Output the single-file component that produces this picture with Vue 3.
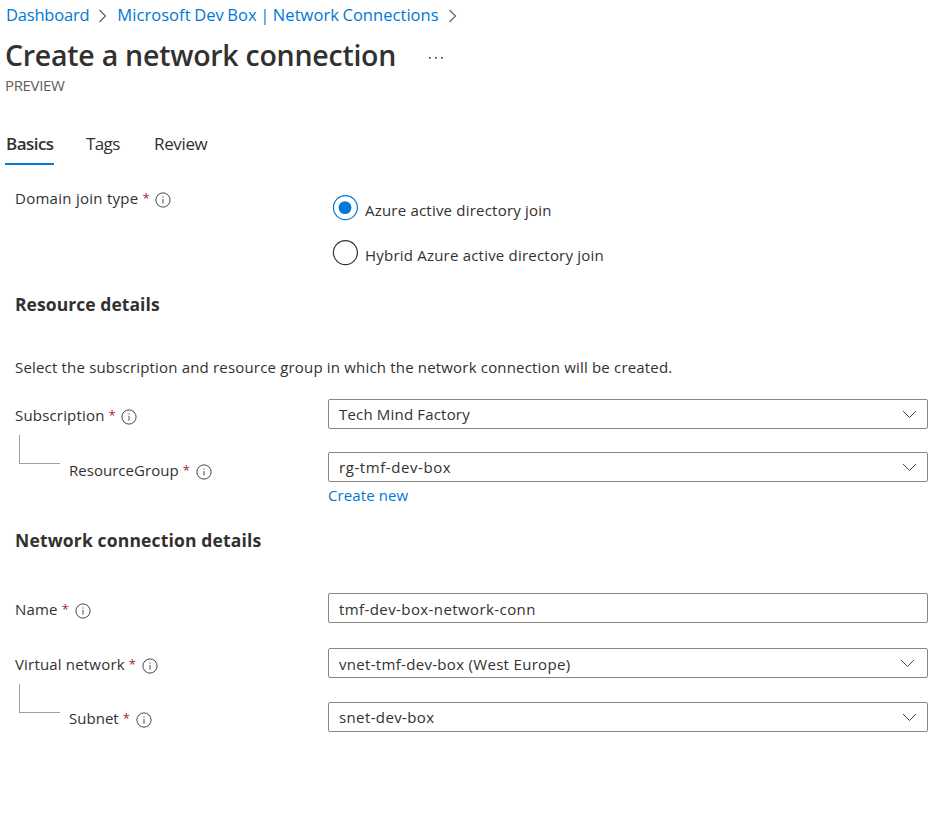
<script setup>
const crumbs = [
  { text: 'Dashboard', cls: 'crumb-dash' },
  { text: 'Microsoft Dev Box | Network Connections', cls: 'crumb-net' },
]
const joinTypes = [
  { text: 'Azure active directory join', checked: true },
  { text: 'Hybrid Azure active directory join', checked: false },
]
const resourceFields = [
  { id: 'subscription', label: 'Subscription', value: 'Tech Mind Factory', select: true },
  { id: 'group', label: 'ResourceGroup', value: 'rg-tmf-dev-box', select: true, nested: true },
]
const networkFields = [
  { id: 'name', label: 'Name', value: 'tmf-dev-box-network-conn' },
  { id: 'vnet', label: 'Virtual network', value: 'vnet-tmf-dev-box (West Europe)', select: true },
  { id: 'subnet', label: 'Subnet', value: 'snet-dev-box', select: true, nested: true },
]
</script>

<template>
  <main class="page">
    <nav class="crumbs">
      <template v-for="c in crumbs" :key="c.text">
        <a :class="c.cls">{{ c.text }}</a>
        <svg class="crumb-arrow" width="9" height="14" viewBox="0 0 9 14"><path d="M1.5 1 L7.5 7 L1.5 13" /></svg>
      </template>
    </nav>
    <header class="title-row">
      <h1>Create a network connection</h1>
      <svg class="more" width="15" height="3" viewBox="0 0 15 3"><rect x="0" y="1" width="1.6" height="1.6" /><rect x="6" y="1" width="1.6" height="1.6" /><rect x="12" y="1" width="1.6" height="1.6" /></svg>
    </header>
    <div class="preview"><span>PREVIEW</span></div>
    <nav class="tabs">
      <a class="tab active"><span>Basics</span></a>
      <a class="tab tags"><span>Tags</span></a>
      <a class="tab review"><span>Review</span></a>
    </nav>

    <section class="join">
      <div class="label">
        <span class="t">Domain join type</span><span class="star">*</span>
        <svg class="info" width="16" height="16" viewBox="0 0 16 16"><circle cx="8" cy="8" r="7.1" /><path d="M8 7v4.6M8 4.4v1.2" /></svg>
      </div>
      <div class="radios">
        <label v-for="j in joinTypes" :key="j.text" class="radio" :class="{ checked: j.checked }">
          <svg width="26" height="26" viewBox="0 0 26 26"><circle class="ring" cx="13.4" cy="12.6" r="12" /><circle v-if="j.checked" class="dot" cx="13" cy="12.6" r="6.4" /></svg>
          <span class="t">{{ j.text }}</span>
        </label>
      </div>
    </section>

    <h2 class="resource-heading"><span>Resource details</span></h2>
    <p class="note"><span>Select the subscription and resource group in which the network connection will be created.</span></p>

    <section class="fields">
      <div v-for="f in resourceFields" :key="f.id" class="row" :class="[f.id, { nested: f.nested }]">
        <div class="label">
          <i v-if="f.nested" class="branch"></i>
          <span class="t">{{ f.label }}</span><span class="star">*</span>
          <svg class="info" width="16" height="16" viewBox="0 0 16 16"><circle cx="8" cy="8" r="7.1" /><path d="M8 7v4.6M8 4.4v1.2" /></svg>
        </div>
        <div class="box">
          <span class="v">{{ f.value }}</span>
          <svg class="chevron" width="15" height="9" viewBox="0 0 15 9"><path d="M1 1 L7.5 7.5 L14 1" /></svg>
        </div>
      </div>
    </section>
    <div class="create"><a>Create new</a></div>

    <h2 class="network-heading"><span>Network connection details</span></h2>
    <section class="fields">
      <div v-for="f in networkFields" :key="f.id" class="row" :class="[f.id, { nested: f.nested }]">
        <div class="label">
          <i v-if="f.nested" class="branch"></i>
          <span class="t">{{ f.label }}</span><span class="star">*</span>
          <svg class="info" width="16" height="16" viewBox="0 0 16 16"><circle cx="8" cy="8" r="7.1" /><path d="M8 7v4.6M8 4.4v1.2" /></svg>
        </div>
        <div class="box">
          <span class="v">{{ f.value }}</span>
          <svg v-if="f.select" class="chevron" width="15" height="9" viewBox="0 0 15 9"><path d="M1 1 L7.5 7.5 L14 1" /></svg>
        </div>
      </div>
    </section>
  </main>
</template>

<style>
body { margin: 0; background: #fff; }
</style>

<style scoped>
.page {
  box-sizing: border-box;
  width: 934px;
  height: 815px;
  overflow: hidden;
  background: #fff;
  color: #323130;
  font-family: "Open Sans", "Noto Sans", sans-serif;
  font-size: 15px;
  letter-spacing: 0.18px;
  white-space: nowrap;
}
svg { fill: none; flex: none; display: block; }
a { color: #0078d4; }
.crumbs { display: flex; align-items: center; height: 29px; padding-left: 6px; font-size: 16.5px; }
.crumb-dash { letter-spacing: -0.2px; }
.crumb-net { letter-spacing: 0.05px; word-spacing: -0.8px; }
.crumb-arrow { margin: 2px 10px 0 9px; stroke: #605e5c; stroke-width: 1.1; }
.title-row { display: flex; align-items: center; height: 53px; padding-left: 5px; }
h1 { margin: 0; font-size: 28.5px; font-weight: 600; line-height: 53px; letter-spacing: -0.25px; }
.more { margin: 3px 0 0 33px; fill: #323130; }
.preview { height: 38px; padding-left: 5px; line-height: 6px; font-size: 15px; letter-spacing: -0.35px; color: #605e5c; }
.tabs { display: flex; gap: 32px; height: 45px; padding-left: 5px; font-size: 17px; line-height: 48px; letter-spacing: -0.35px; }
.tab { box-sizing: border-box; height: 45px; color: #323130; }
.active { width: 49px; font-weight: 600; border-bottom: 2px solid #0078d4; padding-left: 1px; letter-spacing: -0.55px; }
.tags { width: 36px; letter-spacing: -0.6px; }
.join { display: grid; grid-template-columns: 313px 1fr; height: 115px; padding-left: 15px; }
.label { display: flex; align-items: center; height: 30px; margin-top: 1px; }
.join .label { margin-top: 18px; letter-spacing: 0.27px; }
.star { color: #a4262c; margin: 0 0 0 4px; font-size: 13px; }
.info { margin: 3px 0 0 5.5px; stroke: #484644; stroke-width: 1; }
.radios { padding: 30px 0 0 4px; }
.radio { display: flex; height: 45px; gap: 7px; }
.radio .t { line-height: 31px; letter-spacing: 0.21px; }
.ring { stroke: #323130; stroke-width: 1.2; }
.checked .ring { stroke: #0078d4; }
.dot { fill: #0078d4; }
h2 { margin: 0; padding-left: 15px; font-size: 17.5px; font-weight: 700; height: 48px; line-height: 48px; letter-spacing: 0.06px; }
.note { margin: 0; height: 71px; padding-left: 15px; line-height: 79px; }
.row { display: grid; grid-template-columns: 313px 600px; height: 55px; padding-left: 15px; }
.subscription { height: 53px; }
.group { height: 30px; }
.vnet { height: 54px; }
.nested .label { letter-spacing: 0.03px; }
.nested .info { margin-left: 6.5px; }
.group .label { margin-top: 3px; }
.subnet .label { margin-top: 1px; }
.branch { box-sizing: border-box; width: 41px; height: 29px; margin: -42px 9px 0 4px; border: solid #a19f9d; border-width: 0 0 1px 1px; }
.subnet .branch { margin-top: -40px; }
.box { box-sizing: border-box; display: flex; align-items: center; justify-content: space-between; height: 30px; padding: 0 10px; border: 1px solid #8a8886; border-radius: 2px; }
.chevron { stroke: #484644; stroke-width: 1; }
.vnet .chevron { margin-right: 2px; }
.group .v { letter-spacing: 0.58px; }
.name .v { letter-spacing: 0.41px; padding-top: 2px; }
.vnet .v { letter-spacing: 0.31px; padding-top: 2px; }
.subnet .v { letter-spacing: 0.38px; }
.create { height: 34px; padding-left: 328px; line-height: 27px; letter-spacing: 0.1px; }
.network-heading { height: 77px; letter-spacing: 0.16px; }
</style>
